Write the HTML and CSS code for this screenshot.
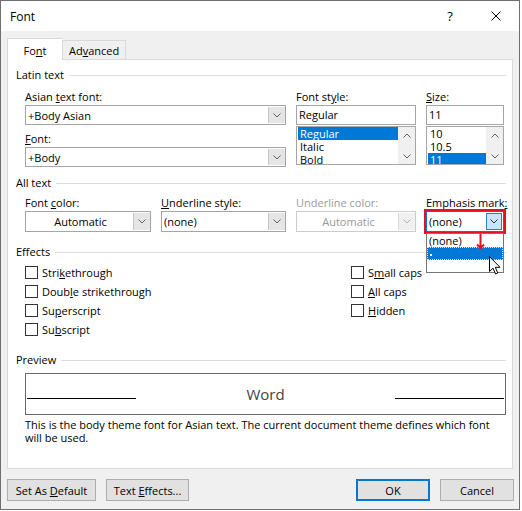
FILE: index.html
```html
<!DOCTYPE html>
<html lang="en">

<head>
    <meta charset="UTF-8">
    <meta name="viewport" content="width=device-width, initial-scale=1.0">
    <title>Font</title>
    <link rel="stylesheet" href="styles.css">
</head>

<body>

    <div class="window">
        <div class="titlebar">
            <span class="title">Font</span>
            <span class="caption-btn help">?</span>
            <span class="caption-btn close">
                <svg width="10" height="10" viewBox="0 0 10 10"><path d="M0.5 0.5 L9.5 9.5 M9.5 0.5 L0.5 9.5" stroke="#000" stroke-width="1" fill="none"/></svg>
            </span>
        </div>

        <div class="dialog-body">
            <div class="tabs">
                <div class="tab active">Fo<u>n</u>t</div>
                <div class="tab">Ad<u>v</u>anced</div>
            </div>

            <div class="panel">
                <!-- Latin text -->
                <div class="group-title">Latin text</div>
                <div class="latin-grid indent">
                    <div class="field">
                        <label>Asian <u>t</u>ext font:</label>
                        <div class="combo">
                            <span class="value">+Body Asian</span>
                            <span class="arrow"><svg width="8" height="5" viewBox="0 0 8 5"><path d="M0.5 0.5 L4 4 L7.5 0.5" stroke="#606060" fill="none"/></svg></span>
                        </div>
                        <label class="second"><u>F</u>ont:</label>
                        <div class="combo">
                            <span class="value">+Body</span>
                            <span class="arrow"><svg width="8" height="5" viewBox="0 0 8 5"><path d="M0.5 0.5 L4 4 L7.5 0.5" stroke="#606060" fill="none"/></svg></span>
                        </div>
                    </div>

                    <div class="field">
                        <label>Font st<u>y</u>le:</label>
                        <div class="textbox">Regular</div>
                        <div class="listbox">
                            <div class="items">
                                <div class="item selected">Regular</div>
                                <div class="item">Italic</div>
                                <div class="item">Bold</div>
                            </div>
                            <div class="scrollbar">
                                <svg width="8" height="5" viewBox="0 0 8 5"><path d="M0.5 4.5 L4 1 L7.5 4.5" stroke="#606060" fill="none"/></svg>
                                <svg width="8" height="5" viewBox="0 0 8 5"><path d="M0.5 0.5 L4 4 L7.5 0.5" stroke="#606060" fill="none"/></svg>
                            </div>
                        </div>
                    </div>

                    <div class="field">
                        <label><u>S</u>ize:</label>
                        <div class="textbox">11</div>
                        <div class="listbox">
                            <div class="items">
                                <div class="item">10</div>
                                <div class="item">10.5</div>
                                <div class="item selected">11</div>
                            </div>
                            <div class="scrollbar">
                                <svg width="8" height="5" viewBox="0 0 8 5"><path d="M0.5 4.5 L4 1 L7.5 4.5" stroke="#606060" fill="none"/></svg>
                                <svg width="8" height="5" viewBox="0 0 8 5"><path d="M0.5 0.5 L4 4 L7.5 0.5" stroke="#606060" fill="none"/></svg>
                            </div>
                        </div>
                    </div>
                </div>

                <!-- All text -->
                <div class="group-title all-text">All text</div>
                <div class="all-grid indent">
                    <div class="field">
                        <label>Font <u>c</u>olor:</label>
                        <div class="combo tall">
                            <span class="value center">Automatic</span>
                            <span class="arrow"><svg width="8" height="5" viewBox="0 0 8 5"><path d="M0.5 0.5 L4 4 L7.5 0.5" stroke="#606060" fill="none"/></svg></span>
                        </div>
                    </div>
                    <div class="field">
                        <label><u>U</u>nderline style:</label>
                        <div class="combo tall">
                            <span class="value">(none)</span>
                            <span class="arrow"><svg width="8" height="5" viewBox="0 0 8 5"><path d="M0.5 0.5 L4 4 L7.5 0.5" stroke="#606060" fill="none"/></svg></span>
                        </div>
                    </div>
                    <div class="field disabled">
                        <label>Underline color:</label>
                        <div class="combo tall">
                            <span class="value center">Automatic</span>
                            <span class="arrow"><svg width="8" height="5" viewBox="0 0 8 5"><path d="M0.5 0.5 L4 4 L7.5 0.5" stroke="#b0b0b0" fill="none"/></svg></span>
                        </div>
                    </div>
                    <div class="field emphasis">
                        <label>Emphasis mark<u>:</u></label>
                        <div class="combo tall focused">
                            <span class="value">(none)</span>
                            <span class="arrow"><svg width="8" height="5" viewBox="0 0 8 5"><path d="M0.5 0.5 L4 4 L7.5 0.5" stroke="#333" fill="none"/></svg></span>
                        </div>
                        <div class="dropdown-list">
                            <div class="drop-item">(none)</div>
                            <div class="drop-item selected"><span class="dot"></span></div>
                            <div class="drop-item"></div>
                            <svg class="red-arrow" width="9" height="16" viewBox="0 0 9 16"><path d="M4.5 0 V14 M1 10.5 L4.5 14 L8 10.5" stroke="#e81123" stroke-width="2" fill="none"/></svg>
                            <svg class="pointer" width="13" height="19" viewBox="0 0 13 19"><path d="M0.5 0.5 L0.5 15.5 L4 12.2 L6.6 18 L8.8 17 L6.3 11.3 L11 11.3 Z" fill="#fff" stroke="#000" stroke-width="1"/></svg>
                        </div>
                    </div>
                </div>

                <!-- Effects -->
                <div class="group-title effects-title">Effects</div>
                <div class="effects indent">
                    <div class="effects-col">
                        <div class="check"><span class="box"></span>Stri<u>k</u>ethrough</div>
                        <div class="check"><span class="box"></span>Doub<u>l</u>e strikethrough</div>
                        <div class="check"><span class="box"></span>Su<u>p</u>erscript</div>
                        <div class="check"><span class="box"></span>Su<u>b</u>script</div>
                    </div>
                    <div class="effects-col">
                        <div class="check"><span class="box"></span>S<u>m</u>all caps</div>
                        <div class="check"><span class="box"></span><u>A</u>ll caps</div>
                        <div class="check"><span class="box"></span><u>H</u>idden</div>
                    </div>
                </div>

                <!-- Preview -->
                <div class="group-title preview-title">Preview</div>
                <div class="indent">
                    <div class="preview">
                        <span class="base-line"></span>
                        <span class="word">Word</span>
                        <span class="base-line"></span>
                    </div>
                    <p class="description">This is the body theme font for Asian text. The current document theme defines which font will be used.</p>
                </div>
            </div>

            <div class="buttons">
                <button class="btn default-btn">Set As <u>D</u>efault</button>
                <button class="btn effects-btn">Text <u>E</u>ffects...</button>
                <span class="spacer"></span>
                <button class="btn ok">OK</button>
                <button class="btn cancel">Cancel</button>
            </div>
        </div>
    </div>

</body>

</html>
```

FILE: styles.css
```css
/* Global Styles */
* {
    box-sizing: border-box;
}

body {
    margin: 0;
    background-color: #fff;
    font-family: "Open Sans", "Noto Sans", sans-serif;
    font-size: 11px;
    color: #000;
}

u {
    text-underline-offset: 1px;
}

.window {
    width: 520px;
    height: 510px;
    border: 1px solid #6f6f6f;
    background-color: #f0f0f0;
    display: flex;
    flex-direction: column;
}

/* Title bar */
.titlebar {
    height: 30px;
    background-color: #fff;
    display: flex;
    align-items: center;
    padding-left: 9px;
}

.titlebar .title {
    flex: 1;
    font-size: 12px;
}

.caption-btn {
    width: 46px;
    height: 30px;
    display: flex;
    align-items: center;
    justify-content: center;
}

.help {
    font-size: 13px;
}

/* Dialog body */
.dialog-body {
    flex: 1;
    padding: 7px 6px 0 6px;
}

.tabs {
    display: flex;
    align-items: flex-end;
    height: 22px;
    margin-bottom: -1px;
    position: relative;
    z-index: 1;
}

.tab {
    height: 19px;
    padding: 0 6px;
    border: 1px solid #d9d9d9;
    border-bottom: none;
    background-color: #f0f0f0;
    line-height: 19px;
    margin-bottom: 1px;
}

.tab.active {
    height: 22px;
    width: 55px;
    text-align: center;
    background-color: #fff;
    line-height: 23px;
    margin-bottom: 0;
    border-right: none;
}

.panel {
    height: 410px;
    background-color: #fff;
    border: 1px solid #d9d9d9;
    padding: 8px 6px 0 8px;
}

.group-title {
    display: flex;
    align-items: center;
    height: 14px;
    line-height: 14px;
}

.group-title::after {
    content: "";
    flex: 1;
    height: 1px;
    background-color: #dcdcdc;
    margin-left: 5px;
}

.indent {
    margin-left: 9px;
}

label {
    display: block;
    line-height: 16px;
    white-space: nowrap;
}

label.second {
    margin-top: 6px;
}

/* Combo boxes */
.combo {
    display: flex;
    height: 20px;
    border: 1px solid #a5a5a5;
    background-color: #fff;
}

.combo.tall {
    height: 21px;
}

.combo .value {
    flex: 1;
    padding-left: 2px;
    display: flex;
    align-items: center;
    white-space: nowrap;
}

.combo .value.center {
    justify-content: center;
}

.combo .arrow {
    width: 17px;
    margin: 1px 0 1px 0;
    background-color: #e5e5e5;
    border-left: 1px solid #c5c5c5;
    display: flex;
    align-items: center;
    justify-content: center;
}

.textbox {
    height: 20px;
    border: 1px solid #a5a5a5;
    background-color: #fff;
    padding-left: 2px;
    line-height: 18px;
}

.listbox {
    display: flex;
    height: 39px;
    margin-top: 1px;
    border: 1px solid #a5a5a5;
    background-color: #fff;
    padding-left: 1px;
    overflow: hidden;
}

.listbox .items {
    flex: 1;
}

.listbox .item {
    height: 13px;
    line-height: 13px;
    padding-left: 2px;
}

.listbox .item.selected,
.drop-item.selected {
    background-color: #0078d7;
    color: #fff;
}

.scrollbar {
    width: 17px;
    background-color: #f0f0f0;
    display: flex;
    flex-direction: column;
    align-items: center;
    justify-content: space-between;
    padding: 6px 0 5px;
}

/* Latin text */
.latin-grid {
    display: grid;
    grid-template-columns: 261px 120px 78px;
    column-gap: 10px;
    margin-top: 7px;
}

/* All text */
.all-text {
    margin-top: 9px;
}

.all-grid {
    display: grid;
    grid-template-columns: 126px 125px 120px 78px;
    column-gap: 10px;
    margin-top: 5px;
}

.disabled {
    color: #9a9a9a;
}

.disabled .combo {
    border-color: #cccccc;
}

.disabled .combo .arrow {
    background-color: #f0f0f0;
    border-left-color: #dadada;
}

.emphasis {
    position: relative;
}

.combo.focused {
    border-color: #0078d7;
    outline: 2px solid #e81123;
    outline-offset: 0;
}

.combo.focused .arrow {
    background-color: #cce4f7;
    border: 1px solid #2d7fc0;
    margin: 1px 1px 1px 0;
    width: 16px;
}

.dropdown-list {
    position: absolute;
    left: 0;
    top: 38px;
    width: 78px;
    height: 40px;
    border: 1px solid #767676;
    background-color: #fff;
    z-index: 2;
}

.drop-item {
    height: 13px;
    line-height: 13px;
    padding-left: 2px;
}

.drop-item.selected {
    outline: 1px dotted #d0e4f5;
    outline-offset: -1px;
    display: flex;
    align-items: center;
    padding-left: 3px;
}

.dot {
    width: 2px;
    height: 2px;
    margin-top: 3px;
    background-color: #fff;
}

.red-arrow {
    position: absolute;
    left: 49px;
    top: 0;
}

.pointer {
    position: absolute;
    left: 62px;
    top: 22px;
}

/* Effects */
.effects-title {
    margin-top: 13px;
}

.effects {
    display: flex;
    margin-top: 4px;
}

.effects-col {
    flex: 0 0 326px;
}

.effects-col + .effects-col {
    flex: 1;
}

.check {
    height: 19px;
    display: flex;
    align-items: center;
}

.check .box {
    width: 13px;
    height: 13px;
    border: 1px solid #333;
    background-color: #fff;
    margin-right: 4px;
}

/* Preview */
.preview-title {
    margin-top: 14px;
}

.preview {
    margin-top: 6px;
    height: 42px;
    border: 1px solid #6a6a6a;
    display: flex;
    align-items: center;
    padding: 0 1px;
}

.preview .base-line {
    width: 109px;
    height: 1px;
    background-color: #000;
    margin-top: 8px;
}

.preview .word {
    flex: 1;
    text-align: center;
    font-size: 15px;
    color: #444;
}

.description {
    margin: 3px 0 0;
    line-height: 13px;
}

/* Buttons */
.buttons {
    display: flex;
    margin-top: 10px;
    margin-right: -1px;
}

.btn {
    height: 22px;
    background-color: #e1e1e1;
    border: 1px solid #adadad;
    font-family: inherit;
    font-size: 11px;
    color: #000;
    padding: 0;
}

.default-btn {
    width: 89px;
}

.effects-btn {
    width: 83px;
    margin-left: 10px;
}

.spacer {
    flex: 1;
}

.ok {
    width: 74px;
    border: 2px solid #0078d7;
}

.cancel {
    width: 74px;
    margin-left: 10px;
}
```
